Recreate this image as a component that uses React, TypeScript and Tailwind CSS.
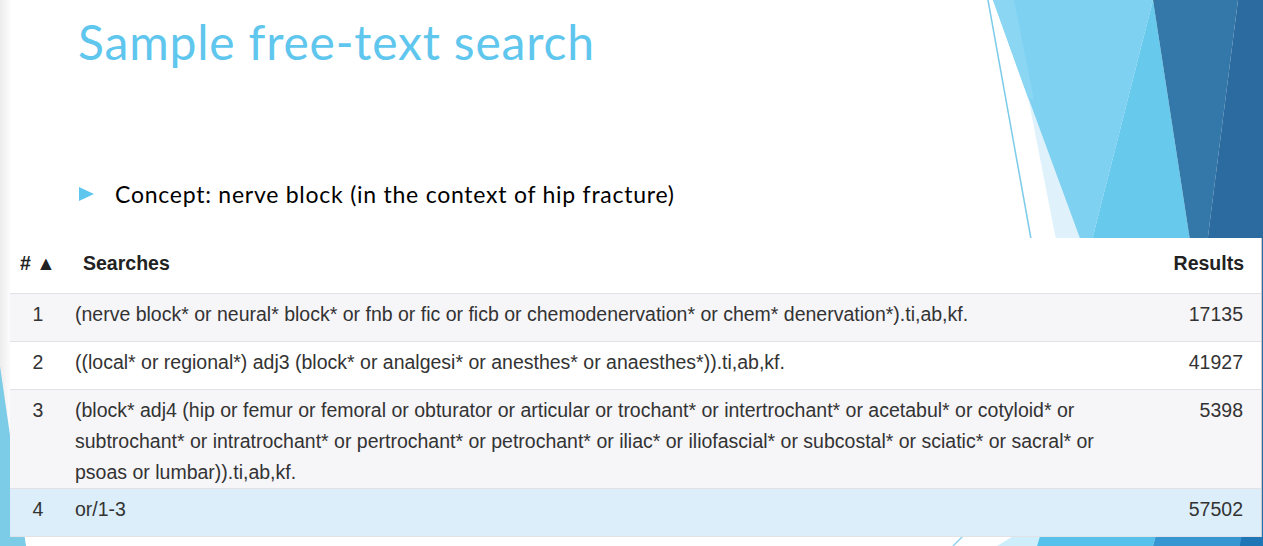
import React from "react"

type Row = {
  n: number
  query: string
  results: string
}

const rows: Row[] = [
  {
    n: 1,
    query:
      "(nerve block* or neural* block* or fnb or fic or ficb or chemodenervation* or chem* denervation*).ti,ab,kf.",
    results: "17135",
  },
  {
    n: 2,
    query: "((local* or regional*) adj3 (block* or analgesi* or anesthes* or anaesthes*)).ti,ab,kf.",
    results: "41927",
  },
  {
    n: 3,
    query:
      "(block* adj4 (hip or femur or femoral or obturator or articular or trochant* or intertrochant* or acetabul* or cotyloid* or subtrochant* or intratrochant* or pertrochant* or petrochant* or iliac* or iliofascial* or subcostal* or sciatic* or sacral* or psoas or lumbar)).ti,ab,kf.",
    results: "5398",
  },
  { n: 4, query: "or/1-3", results: "57502" },
]

// slide theme art (the facet shapes on the right and bottom left)
function SlideArt() {
  return (
    <svg className="absolute inset-0" width="1263" height="546" viewBox="0 0 1263 546">
      <defs>
        <linearGradient id="edge" x1="0" x2="1" y1="0" y2="0">
          <stop offset="0" stopColor="#ececec" />
          <stop offset="1" stopColor="#ffffff" />
        </linearGradient>
      </defs>
      <rect x="0" y="0" width="12" height="546" fill="url(#edge)" />
      {/* top right facets */}
      <polygon points="993,0 1153,0 1087,260 1086,260" fill="#7fd1f1" />
      <polygon points="993,0 1014,0 1034,100 1028,97" fill="#8ad6f3" />
      <polygon points="1028,97 1088,260 1060,260" fill="#dff2fb" />
      <polygon points="1153,0 1193,260 1087,260" fill="#67c9ec" />
      <polygon points="1153,0 1238,0 1205,260 1193,260" fill="#3478a9" />
      <polygon points="1238,0 1263,0 1263,546 1205,546 1205,260" fill="#2b6b9f" />
      <line x1="988" y1="0" x2="1033" y2="250" stroke="#7ccbe9" strokeWidth="1.5" />
      {/* bottom facets */}
      <line x1="953" y1="546" x2="975" y2="524" stroke="#8fd3ee" strokeWidth="1.5" />
      <polygon points="997,546 1040,520 1045,520 1037,546" fill="#cdeefa" />
      <polygon points="1037,546 1045,520 1160,520 1153,546" fill="#56c1ea" />
      <polygon points="1153,546 1160,520 1245,520 1240,546" fill="#3596d2" />
      <polygon points="1240,546 1245,520 1263,520 1263,546" fill="#1f76b6" />
      {/* bottom left facet */}
      <polygon points="0,366 26,546 0,546" fill="#7ccbe7" />
    </svg>
  )
}

export default function App() {
  return (
    <div className="relative w-[1263px] h-[546px] overflow-hidden bg-white">
      <SlideArt />

      <div className="relative flex flex-col">
        {/* slide heading */}
        <div className="h-[238px] flex flex-col">
          <h1
            className="mt-[18px] pl-[78px] text-[48px] leading-none tracking-[0.8px] text-[#5fc6ee]"
            style={{ fontFamily: "Lato, 'Open Sans', sans-serif" }}
          >
            Sample free-text search
          </h1>
          <div className="mt-[113px] flex items-center pl-[79px]">
            <svg width="15" height="14" viewBox="0 0 15 14" className="shrink-0">
              <polygon points="0,0 15,7 0,14" fill="#5fc6ee" />
            </svg>
            <span
              className="ml-[21px] text-[23px] leading-[30px] tracking-[0.75px] text-black"
              style={{ fontFamily: "Lato, 'Open Sans', sans-serif" }}
            >
              Concept: nerve block (in the context of hip fracture)
            </span>
          </div>
        </div>

        {/* search history table */}
        <div
          className="ml-[10px] w-[1252px] bg-white border-r border-[#c9c9cc] text-[19.5px] text-[#333333]"
          style={{ fontFamily: "'Liberation Sans', Arial, sans-serif" }}
        >
          <div className="flex h-[55px] pt-[10px] font-bold text-[#222222] leading-[31px]">
            <div className="w-[56px] shrink-0 pl-[10px]">#&nbsp;▲</div>
            <div className="flex-1 pl-[17px]">Searches</div>
            <div className="w-[142px] shrink-0 pr-[17px] text-right">Results</div>
          </div>

          {rows.map((row) => {
            let bg = "bg-white"
            if (row.n === 4) bg = "bg-[#dbeef9]"
            else if (row.n % 2 === 1) bg = "bg-[#f6f5f8]"
            return (
              <div
                key={row.n}
                className={`flex border-t border-[#e2e2e6] pt-[5px] leading-[31px] ${bg} ${
                  row.n === 4 ? "min-h-[49px] border-b" : "min-h-[48px]"
                }`}
              >
                <div className="w-[56px] shrink-0 text-center">{row.n}</div>
                <div className="flex-1 pl-[9px]">{row.query}</div>
                <div className="w-[142px] shrink-0 pr-[18px] text-right">{row.results}</div>
              </div>
            )
          })}
        </div>
      </div>
    </div>
  )
}
